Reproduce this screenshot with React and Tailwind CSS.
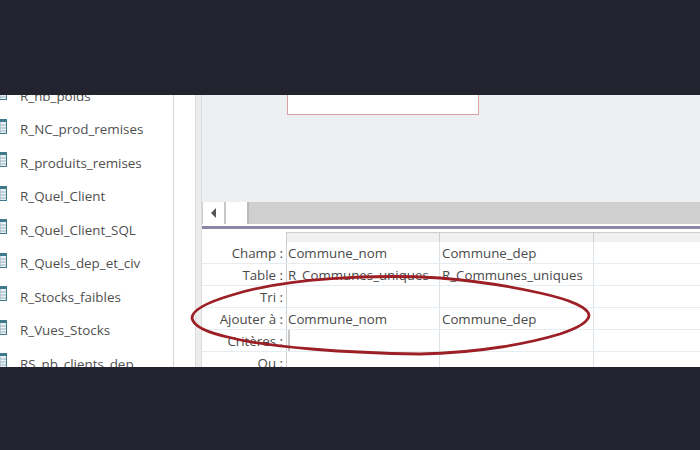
const QUERIES = [
  'R_nb_poids',
  'R_NC_prod_remises',
  'R_produits_remises',
  'R_Quel_Client',
  'R_Quel_Client_SQL',
  'R_Quels_dep_et_civ',
  'R_Stocks_faibles',
  'R_Vues_Stocks',
  'RS_nb_clients_dep',
]

const GRID_ROWS = [
  { label: 'Champ :', a: 'Commune_nom', b: 'Commune_dep' },
  { label: 'Table :', a: 'R_Communes_uniques', b: 'R_Communes_uniques' },
  { label: 'Tri :', a: '', b: '' },
  { label: 'Ajouter à :', a: 'Commune_nom', b: 'Commune_dep' },
  { label: 'Critères :', a: '', b: '', caret: true },
  { label: 'Ou :', a: '', b: '' },
]

function QueryIcon() {
  return (
    <svg width="14" height="15" viewBox="0 0 14 15" className="shrink-0 ml-[-7px] mb-[6px]">
      <rect x="0" y="0" width="14" height="15" fill="#3f7a8c" />
      <rect x="1" y="3" width="12" height="11" fill="#e9f0f4" />
      <path d="M1 6h12M1 9h12M1 12h12M7 3v11" stroke="#9db3c1" strokeWidth="1" />
    </svg>
  )
}

function Sidebar() {
  return (
    <div className="w-[174px] shrink-0 bg-white border-r border-[#d4d4d4] overflow-hidden">
      <div className="flex flex-col mt-[-16px]">
        {QUERIES.map((q) => (
          <div key={q} className="h-[33.5px] flex items-center gap-[13px] text-[13.4px] text-[#4f4f4f]">
            <QueryIcon />
            <span>{q}</span>
          </div>
        ))}
      </div>
    </div>
  )
}

function GridRow({ row }) {
  return (
    <div className="h-[22px] flex items-center text-[13.3px] text-[#4a4a4a] border-b border-[#e6edf2]">
      <div className="w-[84px] h-full flex items-center justify-end pt-[3px] pr-[3px] shrink-0 bg-white">{row.label}</div>
      <div className="relative w-[153px] h-full flex items-center pt-[3px] pl-[1px] shrink-0 border-l border-[#c9cfd3] whitespace-nowrap overflow-hidden">
        {row.caret && <span className="absolute left-[1px] top-0 w-[2px] h-full bg-[#c4c4c4]" />}
        {row.a}
      </div>
      <div className="w-[154px] h-full flex items-center pt-[3px] pl-[2px] shrink-0 border-l border-[#dbe3e8] whitespace-nowrap overflow-hidden">
        {row.b}
      </div>
      <div className="flex-1 h-full border-l border-[#dbe3e8]" />
    </div>
  )
}

export default function App() {
  return (
    <div className="relative w-[700px] h-[450px] flex flex-col bg-[#232330] overflow-hidden font-['Open_Sans','Liberation_Sans',sans-serif]">
      <div className="h-[95px] shrink-0" />
      <div className="h-[272px] shrink-0 flex bg-white">
        <Sidebar />
        <div className="w-[21px] shrink-0 bg-white" />
        <div className="w-[7px] shrink-0 bg-[#ececec] border-x border-[#dcdcdc]" />
        <div className="flex-1 min-w-0 flex flex-col">
          {/* upper pane with the table box */}
          <div className="h-[107px] shrink-0 bg-[#ecf0f3] pl-[85px]">
            <div className="w-[192px] h-[20px] bg-white border border-t-0 border-[#d9a0a0]" />
          </div>
          {/* horizontal scrollbar */}
          <div className="h-[22px] shrink-0 flex bg-[#cfcfcf]">
            <div className="w-[23px] ml-px flex items-center justify-center bg-white border-r-2 border-[#c8c8c8]">
              <svg width="6" height="10" viewBox="0 0 6 10"><path d="M5 0v10L0 5z" fill="#555" /></svg>
            </div>
            <div className="w-[23px] bg-white border-r-2 border-[#bdbab5]" />
          </div>
          <div className="h-[2px] shrink-0 bg-white" />
          <div className="h-[3px] shrink-0 bg-[#8a86a6]" />
          <div className="flex-1 bg-white overflow-hidden pt-[3px]">
            {/* hatched header row */}
            <div className="h-[10px] flex">
              <div className="w-[84px] shrink-0" />
              <div className="w-[153px] shrink-0 bg-[#f1efef] border-l border-t border-[#c9cfd3]" />
              <div className="w-[154px] shrink-0 bg-[#f1efef] border-l border-t border-[#c9cfd3]" />
              <div className="flex-1 bg-[#f1efef] border-l border-t border-[#c9cfd3]" />
            </div>
            {GRID_ROWS.map((r) => <GridRow key={r.label} row={r} />)}
          </div>
        </div>
      </div>
      <div className="flex-1" />
      {/* hand drawn circle over the grid */}
      <svg width="700" height="450" viewBox="0 0 700 450" className="absolute inset-0 pointer-events-none">
        <path
          d="M440 278 C375 274 285 278 232 295 C205 303 192 311 192 318 C193 326 208 333 232 338 C268 347 345 353 420 354 C480 353 530 343 560 334 C578 328 589 322 589 315 C588 308 572 300 540 293 C510 286 475 281 440 278 Z"
          fill="none"
          stroke="#9c1f26"
          strokeWidth="2.8"
        />
      </svg>
    </div>
  )
}
